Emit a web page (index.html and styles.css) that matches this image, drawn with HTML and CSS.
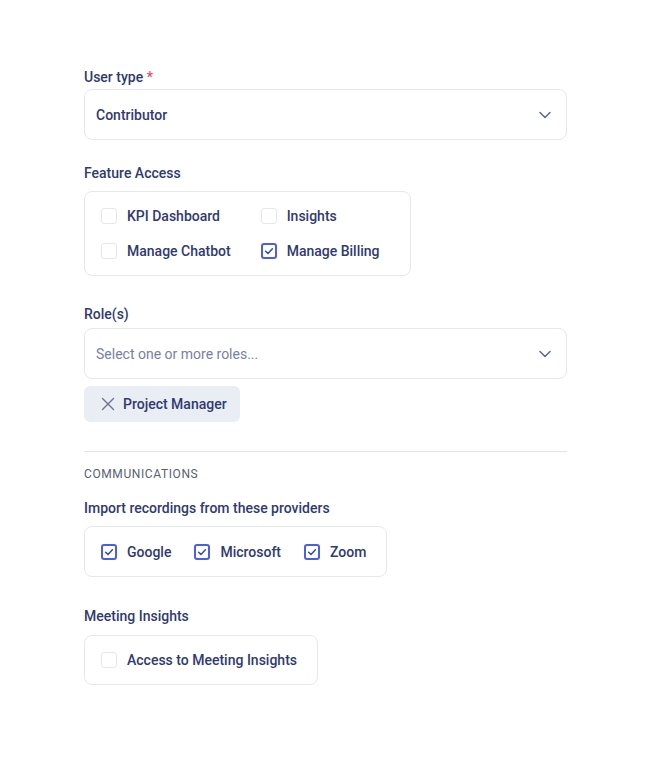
FILE: index.html
```html
<!DOCTYPE html>
<html>
<head>
<meta charset="utf-8">
<link rel="stylesheet" href="styles.css">
</head>
<body>
<form class="form">
  <div class="field">
    <div class="label">User type <span class="req">*</span></div>
    <div class="select">
      <span class="value">Contributor</span>
      <svg class="chev" width="14" height="14" viewBox="0 0 14 14"><path d="M2 4.5 L7 9.5 L12 4.5" fill="none" stroke="#5c6690" stroke-width="1.5" stroke-linecap="round" stroke-linejoin="round"/></svg>
    </div>
  </div>

  <div class="field group">
    <div class="label">Feature Access</div>
    <div class="box grid2">
      <label class="opt"><span class="cb"></span>KPI Dashboard</label>
      <label class="opt"><span class="cb"></span>Insights</label>
      <label class="opt"><span class="cb"></span>Manage Chatbot</label>
      <label class="opt"><span class="cb on"><svg width="10" height="10" viewBox="0 0 10 10"><path d="M1.6 5.2 L4 7.4 L8.4 2.8" fill="none" stroke="#3347c4" stroke-width="1.5" stroke-linecap="round" stroke-linejoin="round"/></svg></span>Manage Billing</label>
    </div>
  </div>

  <div class="field roles">
    <div class="label">Role(s)</div>
    <div class="select">
      <span class="value placeholder">Select one or more roles...</span>
      <svg class="chev" width="14" height="14" viewBox="0 0 14 14"><path d="M2 4.5 L7 9.5 L12 4.5" fill="none" stroke="#5c6690" stroke-width="1.5" stroke-linecap="round" stroke-linejoin="round"/></svg>
    </div>
    <div class="tags">
      <span class="tag"><svg width="14" height="14" viewBox="0 0 14 14"><path d="M1.5 1.5 L12.5 12.5 M12.5 1.5 L1.5 12.5" stroke="#6b7390" stroke-width="1.4" stroke-linecap="round"/></svg>Project Manager</span>
    </div>
  </div>

  <hr class="divider">

  <div class="section-title">COMMUNICATIONS</div>

  <div class="field group">
    <div class="label">Import recordings from these providers</div>
    <div class="box row">
      <label class="opt"><span class="cb on"><svg width="10" height="10" viewBox="0 0 10 10"><path d="M1.6 5.2 L4 7.4 L8.4 2.8" fill="none" stroke="#3347c4" stroke-width="1.5" stroke-linecap="round" stroke-linejoin="round"/></svg></span>Google</label>
      <label class="opt"><span class="cb on"><svg width="10" height="10" viewBox="0 0 10 10"><path d="M1.6 5.2 L4 7.4 L8.4 2.8" fill="none" stroke="#3347c4" stroke-width="1.5" stroke-linecap="round" stroke-linejoin="round"/></svg></span>Microsoft</label>
      <label class="opt"><span class="cb on"><svg width="10" height="10" viewBox="0 0 10 10"><path d="M1.6 5.2 L4 7.4 L8.4 2.8" fill="none" stroke="#3347c4" stroke-width="1.5" stroke-linecap="round" stroke-linejoin="round"/></svg></span>Zoom</label>
    </div>
  </div>

  <div class="field group meeting">
    <div class="label">Meeting Insights</div>
    <div class="box row single">
      <label class="opt"><span class="cb"></span>Access to Meeting Insights</label>
    </div>
  </div>
</form>
</body>
</html>
```
FILE: styles.css
```css
* { box-sizing: border-box; }
html, body { margin: 0; padding: 0; background: #fff; }
body {
  font-family: Roboto, "Noto Sans", sans-serif;
  font-size: 14px;
  color: #303a70;
}
.form {
  width: 483px;
  margin-left: 84px;
  padding-top: 67px;
}
.field { display: flex; flex-direction: column; align-items: flex-start; }
.label {
  line-height: 20px;
  font-size: 14px;
  font-weight: 500;
  color: #303a70;
  margin-bottom: 2px;
}
.req { color: #ef4a5c; }
.group .label { margin-bottom: 8px; }
.select {
  width: 100%;
  height: 51px;
  border: 1px solid #e4e8ef;
  border-radius: 8px;
  display: flex;
  align-items: center;
  justify-content: space-between;
  padding: 0 14px 0 11px;
}
.value { font-weight: 500; color: #303a70; }
.placeholder { font-weight: 400; color: #7a80a3; }
.field + .field { margin-top: 23px; }
.field.roles { margin-top: 28px; }
.roles .label { margin-bottom: 4px; }
.box {
  border: 1px solid #e4e8ef;
  border-radius: 8px;
}
.grid2 {
  display: grid;
  grid-template-columns: auto auto;
  column-gap: 30px;
  row-gap: 15px;
  padding: 14px 30px 14px 16px;
}
.row {
  display: flex;
  align-items: center;
  gap: 23px;
  height: 51px;
  padding: 0 20px 0 16px;
}
.row.single { height: 50px; }
.opt {
  display: flex;
  align-items: center;
  gap: 10px;
  line-height: 20px;
  font-weight: 500;
  color: #303a70;
}
.cb {
  width: 16px;
  height: 16px;
  border: 1.5px solid #e4e7ee;
  border-radius: 3px;
  display: flex;
  align-items: center;
  justify-content: center;
  flex: none;
}
.cb.on { border: 2px solid #4a5fe3; }
.tags { margin-top: 7px; display: flex; }
.tag {
  display: inline-flex;
  align-items: center;
  gap: 8px;
  height: 36px;
  padding: 0 13px 0 17px;
  background: #e9edf4;
  border-radius: 6px;
  font-weight: 500;
  color: #303a70;
}
.divider {
  border: 0;
  border-top: 1px solid #e2e5ea;
  margin: 29px 0 0 0;
  height: 0;
}
.section-title {
  margin-top: 12px;
  font-size: 12px;
  line-height: 20px;
  letter-spacing: 0.6px;
  color: #5a6072;
  font-weight: 400;
}
.section-title + .field { margin-top: 14px; }
.field.meeting { margin-top: 29px; }
.meeting .label { margin-bottom: 9px; }
```
